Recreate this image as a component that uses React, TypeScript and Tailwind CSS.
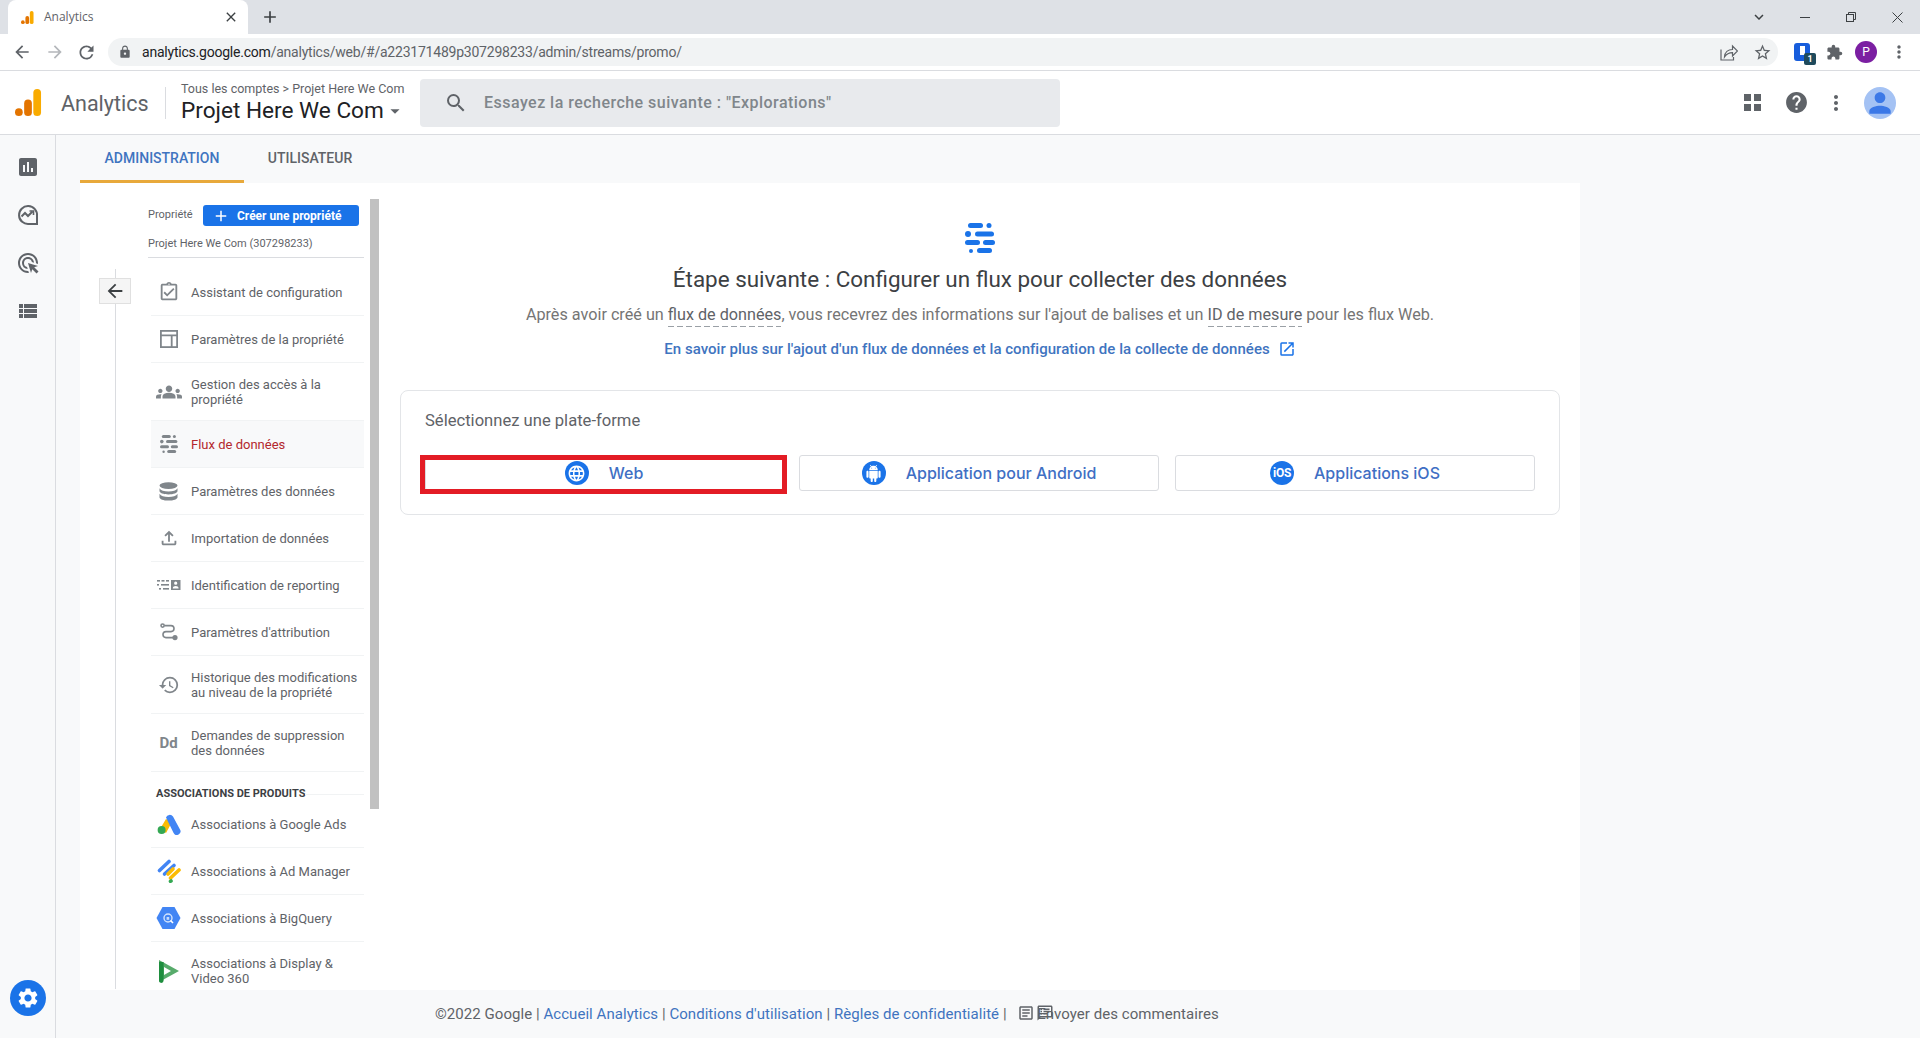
import React from "react";
import {
  MdArrowBack, MdArrowForward, MdRefresh, MdLock, MdClose, MdAdd, MdMoreVert, MdSearch, MdHelp, MdPerson,
  MdAssessment, MdOutlineAdsClick, MdViewList, MdSettings, MdGroups, MdOutlineFileUpload, MdHistory,
  MdOpenInNew, MdLanguage, MdExtension, MdStarBorder, MdOutlineAssignmentTurnedIn, MdArrowDropDown,
  MdOutlineArticle, MdKeyboardArrowDown, MdOutlineSpeakerNotes,
} from "react-icons/md";

function AnalyticsLogo({ size }: { size: number }) {
  return (
    <svg width={size} height={size} viewBox="0 0 28 28">
      <rect x="19" y="0" width="8" height="28" rx="4" fill="#f9ab00" />
      <rect x="9.5" y="11" width="8" height="17" rx="4" fill="#e37400" />
      <circle cx="4" cy="24" r="4" fill="#e37400" />
    </svg>
  );
}

function StreamIcon({ size, color }: { size: number; color: string }) {
  return (
    <svg width={size} height={size} viewBox="0 0 30 30" fill={color}>
      <rect x="3" y="0" width="15" height="5" rx="2.5" />
      <circle cx="24" cy="2.5" r="2.5" />
      <circle cx="3" cy="11" r="3" />
      <rect x="10" y="8.5" width="19" height="5" rx="2.5" />
      <rect x="0" y="17" width="15" height="5" rx="2.5" />
      <rect x="18" y="17" width="12" height="5" rx="2.5" />
      <circle cx="6" cy="28" r="2" />
      <rect x="12" y="25" width="15" height="5" rx="2.5" />
    </svg>
  );
}

function LayoutIcon() {
  return (
    <svg width="18" height="18" viewBox="0 0 20 20" fill="none" stroke="#80868b" strokeWidth="2">
      <rect x="1" y="1" width="18" height="18" />
      <path d="M1 6h18M13 6v13" />
    </svg>
  );
}

function ReportingIcon() {
  return (
    <svg width="24" height="14" viewBox="0 0 24 14" fill="#80868b">
      <rect x="0" y="2" width="3" height="1.6" /><rect x="4.5" y="2" width="3" height="1.6" /><rect x="9" y="2" width="3" height="1.6" />
      <rect x="0" y="6" width="2" height="1.6" /><rect x="4" y="6" width="8" height="1.6" />
      <rect x="2" y="10" width="2" height="1.6" /><rect x="6" y="10" width="6" height="1.6" />
      <path fillRule="evenodd" d="M14 2h9.5v10H14zM18.7 3.6a1.6 1.6 0 100 3.2 1.6 1.6 0 000-3.2zM15.8 10.4h5.8c0-1.6-1.4-2.4-2.9-2.4s-2.9.8-2.9 2.4z" />
    </svg>
  );
}

function AttributionIcon() {
  return (
    <svg width="18" height="18" viewBox="0 0 18 18" fill="none" stroke="#80868b" strokeWidth="1.6">
      <circle cx="2.6" cy="2.6" r="1.6" />
      <path d="M4.5 2.6h6.5a3 3 0 010 6H6a3 3 0 000 6h7" />
      <circle cx="15" cy="14.6" r="1.8" fill="#80868b" />
    </svg>
  );
}

function DatabaseIcon() {
  return (
    <svg width="19" height="19" viewBox="0 0 19 19" fill="#80868b">
      <ellipse cx="9.5" cy="3.6" rx="9" ry="3.4" />
      <path d="M.5 6.2c1.2 2.2 4.6 3.2 9 3.2s7.800-1 9-3.200V9c0 1.900-4 3.400-9 3.400S.5 10.900.5 9z" />
      <path d="M.5 11.700c1.200 2.200 4.600 3.200 9 3.200s7.800-1 9-3.200v3.500c0 1.900-4 3.400-9 3.400s-9-1.500-9-3.400z" />
    </svg>
  );
}

function InsightsIcon() {
  return (
    <svg width="24" height="24" viewBox="0 0 24 24" fill="none" stroke="#5f6368" strokeWidth="2">
      <path d="M21 13v8h-8a9 9 0 118-8z" />
      <path d="M5.500 13.500l3.500-3.500 3 3 4.500-4.500" />
      <path d="M13.500 8h4v4" strokeWidth="1.600" />
    </svg>
  );
}

function ShareIcon() {
  return (
    <svg width="18" height="18" viewBox="0 0 18 18" fill="none" stroke="#5f6368" strokeWidth="1.200">
      <path d="M1 6.500V17h12.500v-3" />
      <path d="M4.500 14c.3-4.500 3.500-7.500 8-7.500V3l5 5-5 5V9.700c-3.500 0-6 1.300-8 4.300z" />
    </svg>
  );
}

function AndroidIcon() {
  return (
    <svg width="17" height="17" viewBox="0 0 24 24" fill="#fff">
      <path d="M6 18c0 .55.45 1 1 1h1v3.500c0 .83.67 1.500 1.500 1.500s1.500-.67 1.500-1.500V19h2v3.500c0 .83.67 1.500 1.500 1.500s1.500-.67 1.500-1.500V19h1c.55 0 1-.45 1-1V8H6v10zM3.500 8C2.670 8 2 8.670 2 9.500v7c0 .83.67 1.500 1.500 1.500S5 17.330 5 16.500v-7C5 8.670 4.330 8 3.500 8zm17 0c-.83 0-1.500.67-1.500 1.500v7c0 .83.67 1.500 1.500 1.500s1.500-.67 1.500-1.500v-7c0-.83-.67-1.500-1.500-1.500zm-4.970-5.840l1.300-1.300c.2-.2.2-.51 0-.71-.2-.2-.51-.2-.71 0l-1.480 1.480C13.850 1.230 12.950 1 12 1c-.96 0-1.860.23-2.660.63L7.850.15c-.2-.2-.51-.2-.71 0-.2.2-.2.51 0 .71l1.310 1.310C6.970 3.260 6 5.010 6 7h12c0-1.990-.97-3.750-2.470-4.840zM10 5H9V4h1v1zm5 0h-1V4h1v1z" />
    </svg>
  );
}

function AdsLogo() {
  return (
    <svg width="24" height="22" viewBox="0 0 24 22">
      <path d="M9 6L3 16l6 4 6-11z" fill="#fbbc04" />
      <path d="M9 4.500a4 4 0 017-1l7 13a3.600 3.600 0 01-6.400 3.600z" fill="#4285f4" />
      <circle cx="4.600" cy="17" r="4" fill="#34a853" />
    </svg>
  );
}

function AdManagerLogo() {
  return (
    <svg width="24" height="24" viewBox="0 0 24 24" strokeLinecap="round" strokeWidth="3.600" fill="none">
      <path d="M2.500 11.500L12 2.500" stroke="#4285f4" />
      <path d="M7.500 15L17 6.500" stroke="#4285f4" />
      <path d="M11 15L16 10" stroke="#fbbc04" />
      <path d="M13.500 19L22 11" stroke="#fbbc04" />
      <path d="M13.500 22.300L14 22" stroke="#34a853" />
    </svg>
  );
}

function BigQueryLogo() {
  return (
    <svg width="25" height="22" viewBox="0 0 25 22">
      <path d="M6.500 0h12l6 11-6 11h-12L.5 11z" fill="#4285f4" />
      <circle cx="12" cy="11" r="4" fill="none" stroke="#d2e3fc" strokeWidth="1.400" />
      <path d="M14.500 13.500L17 16" stroke="#fff" strokeWidth="1.600" />
      <rect x="10.600" y="10" width="2.600" height="2.800" fill="#fff" opacity=".7" />
    </svg>
  );
}

function DisplayLogo() {
  return (
    <svg width="22" height="24" viewBox="0 0 22 24">
      <path d="M1 1L21 12 1 23z" fill="#57ab6b" />
      <path d="M6 8l7 4-7 4z" fill="#fff" />
      <path d="M1 3h4.600v18.600a2.300 2.300 0 01-4.600 0z" fill="#1e8e3e" />
    </svg>
  );
}

function IosBadge() {
  return (
    <span className="w-6 h-6 rounded-full bg-[#1a73e8] flex items-center justify-center text-white text-[12px] font-bold leading-none tracking-[-0.3px] font-['Roboto',sans-serif]">
      iOS
    </span>
  );
}

function CircleIcon({ children }: { children: React.ReactNode }) {
  return <span className="w-6 h-6 rounded-full bg-[#1a73e8] flex items-center justify-center text-white">{children}</span>;
}

function NavRow({ icon, label, tall, active }: { icon: React.ReactNode; label: React.ReactNode; tall?: boolean; active?: boolean }) {
  return (
    <div className={`flex items-center gap-[5px] border-b border-[#f1f3f4] text-[13px] leading-[15px] ${tall ? "h-[58px] pt-[1px]" : "h-[47px]"} ${active ? "bg-[#f8f9fa] text-[#b3282d]" : "text-[#5f6368]"}`}>
      <span className="w-[35px] flex justify-center items-center shrink-0">{icon}</span>
      <span>{label}</span>
    </div>
  );
}

function PlatformButton({ icon, label }: { icon: React.ReactNode; label: string }) {
  return (
    <div className="flex-1 h-9 flex items-center justify-center gap-5 border border-[#dadce0] rounded-[3px] text-[#3f6fc4] text-[16px] font-medium font-['Inter',sans-serif]">
      {icon}
      <span>{label}</span>
    </div>
  );
}

const dashed = "pb-[3px] bg-[repeating-linear-gradient(to_right,#9aa0a6_0,#9aa0a6_6px,transparent_6px,transparent_9px)] bg-[length:100%_1px] bg-no-repeat bg-bottom";

export default function App() {
  const gray = "#80868b";
  return (
    <div className="w-[1920px] h-[1038px] flex flex-col overflow-hidden bg-[#f8f9fa] font-['Roboto',sans-serif]">
      {/* Tab strip */}
      <div className="h-[34px] bg-[#dee1e6] flex items-end pl-2 shrink-0">
        <div className="w-[240px] h-[34px] bg-white rounded-t-lg flex items-center pl-[13px] pr-[9px] text-[12px] text-[#5f6368] font-['Open_Sans',sans-serif]">
          <AnalyticsLogo size={13} />
          <span className="ml-[10px] flex-1">Analytics</span>
          <MdClose size={16} color="#3c4043" />
        </div>
        <span className="ml-[12px] h-[34px] flex items-center"><MdAdd size={20} color="#3c4043" /></span>
        <div className="ml-auto h-[34px] flex items-center text-[#3c4043]">
          <span className="w-[46px] flex justify-center"><MdKeyboardArrowDown size={18} /></span>
          <span className="w-[46px] flex justify-center"><svg width="10" height="10" viewBox="0 0 10 10" stroke="#3c4043"><path d="M0 5.500h10" /></svg></span>
          <span className="w-[46px] flex justify-center"><svg width="10" height="10" viewBox="0 0 10 10" fill="none" stroke="#3c4043"><rect x=".5" y="2.500" width="7" height="7" /><path d="M2.500 2.500v-2h7v7h-2" /></svg></span>
          <span className="w-[46px] flex justify-center"><svg width="11" height="11" viewBox="0 0 11 11" stroke="#3c4043"><path d="M.5.5l10 10M10.500.5l-10 10" /></svg></span>
        </div>
      </div>
      {/* Toolbar */}
      <div className="h-[37px] bg-white border-b border-[#dadce0] flex items-center pl-[12px] shrink-0">
        <span className="w-[33px]"><MdArrowBack size={20} color="#5f6368" /></span>
        <span className="w-[31px]"><MdArrowForward size={20} color="#b4b7bb" /></span>
        <span className="w-[32px]"><MdRefresh size={21} color="#5f6368" /></span>
        <div className="w-[1670px] h-7 rounded-full bg-[#f1f3f4] flex items-center pl-[10px] pr-[6px]">
          <MdLock size={14} color="#5f6368" />
          <span className="ml-[10px] text-[14px] text-[#5f6368] tracking-[-0.22px]"><span className="text-[#202124]">analytics.google.com</span>/analytics/web/#/a223171489p307298233/admin/streams/promo/</span>
          <span className="ml-auto flex items-center gap-[15px]">
            <ShareIcon />
            <MdStarBorder size={19} color="#5f6368" />
          </span>
        </div>
        <div className="ml-[16px] flex items-center">
          <span className="relative w-4 h-[18px] rounded-[3px] bg-[#175ddc] border-[3px] border-[#175ddc] flex justify-center">
            <span className="w-[5px] h-[9px] bg-white" />
            <span className="absolute left-[7px] top-[7px] w-3 h-3 bg-[#1f4a5c] text-white text-[9px] font-bold leading-3 text-center rounded-[2px]">1</span>
          </span>
          <span className="ml-[16px]"><MdExtension size={17} color="#5f6368" /></span>
          <span className="ml-[12px] w-[22px] h-[22px] rounded-full bg-[#7b1fa2] text-white text-[12px] flex items-center justify-center">P</span>
          <span className="ml-[12px]"><MdMoreVert size={20} color="#5f6368" /></span>
        </div>
      </div>
      {/* App header */}
      <div className="h-[64px] bg-white border-b border-[#dadce0] flex items-center pl-[15px] shrink-0">
        <AnalyticsLogo size={27} />
        <span className="ml-[19px] mt-[3px] text-[21.5px] text-[#5f6368] w-[104px]">Analytics</span>
        <span className="w-px h-[32px] bg-[#dadce0]" />
        <div className="ml-[15px] w-[239px] flex flex-col mt-[1px]">
          <span className="text-[12.5px] leading-[14px] text-[#5f6368]">Tous les comptes &gt; Projet Here We Com</span>
          <span className="flex items-center mt-[1px] text-[22.6px] leading-[28px] text-[#202124]">Projet Here We Com<MdArrowDropDown size={22} color="#5f6368" /></span>
        </div>
        <div className="w-[640px] h-12 bg-[#e8eaed] rounded flex items-center pl-[24px]">
          <MdSearch size={24} color="#5f6368" />
          <span className="ml-[16px] text-[16px] font-medium tracking-[0.47px] text-[#80868b]">Essayez la recherche suivante : "Explorations"</span>
        </div>
        <div className="ml-auto flex items-center pr-[24px]">
          <span className="grid grid-cols-2 gap-[3px]">
            <i className="w-[7px] h-[7px] bg-[#5f6368]" /><i className="w-[7px] h-[7px] bg-[#5f6368]" />
            <i className="w-[7px] h-[7px] bg-[#5f6368]" /><i className="w-[7px] h-[7px] bg-[#5f6368]" />
          </span>
          <span className="ml-[23px]"><MdHelp size={25} color="#5f6368" /></span>
          <span className="ml-[15px]"><MdMoreVert size={24} color="#5f6368" /></span>
          <span className="ml-[16px] w-8 h-8 rounded-full bg-[#a4c2f4] flex items-end justify-center overflow-hidden"><MdPerson size={32} color="#3b78e7" /></span>
        </div>
      </div>
      {/* Body */}
      <div className="flex-1 flex min-h-0">
        <div className="w-[56px] border-r border-[#dadce0] flex flex-col items-center pt-[20px] shrink-0">
          <MdAssessment size={24} color="#5f6368" />
          <span className="mt-[24px]"><InsightsIcon /></span>
          <span className="mt-[24px]"><MdOutlineAdsClick size={24} color="#5f6368" /></span>
          <span className="mt-[24px]"><MdViewList size={24} color="#5f6368" /></span>
          <span className="mt-auto mb-[22px] w-9 h-9 rounded-full bg-[#1a73e8] flex items-center justify-center"><MdSettings size={24} color="#fff" /></span>
        </div>
        <div className="flex-1 pl-[24px] flex flex-col min-w-0">
          <div className="h-[48px] flex text-[14px] font-medium shrink-0">
            <div className="w-[164px] flex items-center justify-center border-b-[3px] border-[#e8a93b] text-[#3f74c0] pt-[2px]">ADMINISTRATION</div>
            <div className="w-[132px] flex items-center justify-center text-[#5f6368] pb-[1px]">UTILISATEUR</div>
          </div>
          <div className="w-[1500px] h-[807px] bg-white flex overflow-hidden shrink-0">
            {/* Sidebar */}
            <div className="w-[290px] shrink-0 pr-[6px]">
              <div className="pl-[68px] pt-[22px]">
                <div className="flex items-center h-[21px]">
                  <span className="w-[55px] text-[11px] text-[#5f6368]">Propriété</span>
                  <div className="w-[156px] h-[21px] rounded-[3px] bg-[#1a73e8] text-white text-[12px] font-bold flex items-center pl-[9px]">
                    <MdAdd size={18} />
                    <span className="ml-[7px]">Créer une propriété</span>
                  </div>
                </div>
                <div className="h-[32px] pt-[6px] flex items-center border-b border-[#dadce0] text-[11px] text-[#5f6368]">Projet Here We Com (307298233)</div>
              </div>
              <div className="flex mt-[11px]">
                <div className="w-[71px] shrink-0 pl-[35px]">
                  <div className="relative h-[720px] w-px bg-[#dadce0]">
                    <span className="absolute left-[-16px] top-[9px] w-[32px] h-[26px] bg-[#f5f5f5] border border-[#e0e0e0] flex items-center justify-center"><MdArrowBack size={22} color="#3c4043" /></span>
                  </div>
                </div>
                <div className="flex-1 min-w-0">
                  <NavRow icon={<MdOutlineAssignmentTurnedIn size={22} color={gray} />} label="Assistant de configuration" />
                  <NavRow icon={<LayoutIcon />} label="Paramètres de la propriété" />
                  <NavRow tall icon={<MdGroups size={26} color={gray} />} label={<>Gestion des accès à la<br />propriété</>} />
                  <NavRow active icon={<StreamIcon size={18} color={gray} />} label="Flux de données" />
                  <NavRow icon={<DatabaseIcon />} label="Paramètres des données" />
                  <NavRow icon={<MdOutlineFileUpload size={22} color={gray} />} label="Importation de données" />
                  <NavRow icon={<ReportingIcon />} label="Identification de reporting" />
                  <NavRow icon={<AttributionIcon />} label="Paramètres d'attribution" />
                  <NavRow tall icon={<MdHistory size={22} color={gray} />} label={<>Historique des modifications<br />au niveau de la propriété</>} />
                  <NavRow tall icon={<span className="text-[15px] font-bold text-[#80868b]">Dd</span>} label={<>Demandes de suppression<br />des données</>} />
                  <div className="h-[29px] flex items-center pl-[5px] pt-[16px] text-[11px] font-bold text-[#3c4043]">
                    <span className="whitespace-nowrap">ASSOCIATIONS DE PRODUITS</span>
                    <span className="flex-1 h-px bg-[#f1f3f4]" />
                  </div>
                  <NavRow icon={<AdsLogo />} label="Associations à Google Ads" />
                  <NavRow icon={<AdManagerLogo />} label="Associations à Ad Manager" />
                  <NavRow icon={<BigQueryLogo />} label="Associations à BigQuery" />
                  <NavRow tall icon={<DisplayLogo />} label={<>Associations à Display &amp;<br />Video 360</>} />
                </div>
              </div>
            </div>
            <div className="w-[9px] h-[610px] mt-[16px] bg-[#c1c1c1] shrink-0" />
            {/* Main */}
            <div className="ml-[21px] w-[1160px] pt-[40px] flex flex-col items-center text-center">
              <StreamIcon size={30} color="#1a73e8" />
              <h1 className="mt-[10px] text-[22.45px] leading-[32px] text-[#3c4043]">Étape suivante : Configurer un flux pour collecter des données</h1>
              <p className="mt-[8px] text-[16.2px] leading-[24px] text-[#757575]">
                Après avoir créé un <span className={`${dashed} text-[#5f6368]`}>flux de données</span>, vous recevrez des informations sur l'ajout de balises et un <span className={`${dashed} text-[#5f6368]`}>ID de mesure</span> pour les flux Web.
              </p>
              <a className="mt-[11px] text-[15px] leading-[22px] font-medium tracking-[0.03px] text-[#3f74c0] flex items-center gap-2">
                En savoir plus sur l'ajout d'un flux de données et la configuration de la collecte de données
                <MdOpenInNew size={18} color="#1a73e8" />
              </a>
              <div className="mt-[30px] w-full h-[125px] border border-[#e3e5e8] rounded-lg px-6 pt-5 text-left">
                <div className="text-[16.6px] leading-5 text-[#5f6368]">Sélectionnez une plate-forme</div>
                <div className="mt-6 flex gap-4">
                  <div className="relative flex-1 flex">
                    <PlatformButton icon={<CircleIcon><MdLanguage size={19} /></CircleIcon>} label="Web" />
                    <span className="absolute left-[-5px] right-[-4px] top-0 bottom-[-3px] border-[5px] border-[#e31c25]" />
                  </div>
                  <PlatformButton icon={<CircleIcon><AndroidIcon /></CircleIcon>} label="Application pour Android" />
                  <PlatformButton icon={<IosBadge />} label="Applications iOS" />
                </div>
              </div>
            </div>
          </div>
          <div className="flex-1 flex items-center pl-[355px] text-[15px] tracking-[0.05px] text-[#5f6368]">
            <span>©2022 Google |&nbsp;</span>
            <span className="text-[#3f74c0]">Accueil Analytics</span>
            <span>&nbsp;|&nbsp;</span>
            <span className="text-[#3f74c0]">Conditions d'utilisation</span>
            <span>&nbsp;|&nbsp;</span>
            <span className="text-[#3f74c0]">Règles de confidentialité</span>
            <span>&nbsp;|&nbsp;&nbsp;</span>
            <span className="relative pl-[16px] ml-[7px]">
              <span className="absolute left-[-4px] top-[1px]"><MdOutlineArticle size={18} color="#5f6368" /></span>
              <span className="absolute left-[15px] top-[1px]"><MdOutlineSpeakerNotes size={18} color="#5f6368" /></span>
              Envoyer des commentaires
            </span>
          </div>
        </div>
      </div>
    </div>
  );
}
